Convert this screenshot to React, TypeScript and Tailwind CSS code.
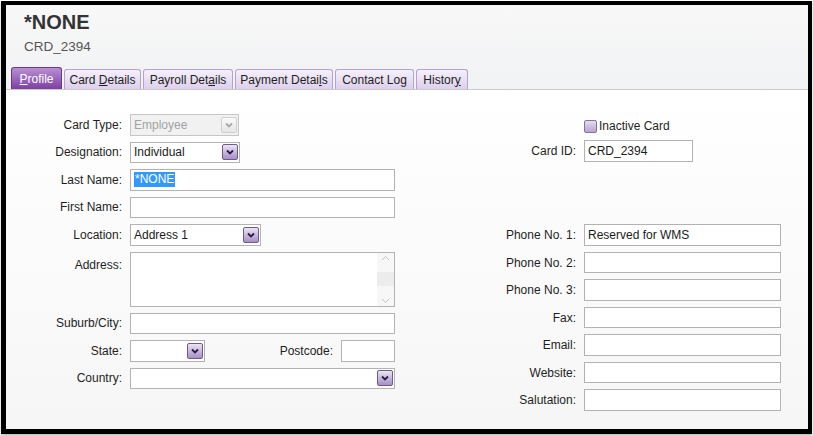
import type { ReactNode } from "react";

const Chevron = ({ color }: { color: string }) => (
    <svg width="10" height="10" viewBox="0 0 10 10">
        <polyline points="2,3.5 5,6.5 8,3.5" fill="none" stroke={color} strokeWidth="1.8" />
    </svg>
);

const DropButton = ({ disabled }: { disabled?: boolean }) =>
    disabled ? (
        <div className="flex h-[16px] w-[16px] items-center justify-center rounded-[2px] border border-[#cfcfcf] bg-gradient-to-b from-[#fafafa] to-[#e6e6e6]">
            <Chevron color="#a8a8a8" />
        </div>
    ) : (
        <div className="flex h-[16px] w-[16px] items-center justify-center rounded-[2px] border border-[#6e5a8c] bg-gradient-to-b from-[#ece4f6] to-[#a68fc6]">
            <Chevron color="#2b1d3d" />
        </div>
    );

const TextBox = ({ w, value, children }: { w: number; value?: string; children?: ReactNode }) => (
    <div
        className="flex h-[21.5px] items-center border border-[#b3b3b3] bg-white px-[3px] text-[#1b1b1b]"
        style={{ width: w }}
    >
        {children ?? value}
    </div>
);

const Select = ({ w, value, disabled }: { w: number; value?: string; disabled?: boolean }) => (
    <div
        className={`flex h-[21.5px] items-center justify-between border pl-[3px] pr-[1px] ${
            disabled ? "border-[#c6c6c6] bg-[#f1f1f1] text-[#a3a3a3]" : "border-[#b3b3b3] bg-white text-[#1b1b1b]"
        }`}
        style={{ width: w }}
    >
        <span>{value}</span>
        <DropButton disabled={disabled} />
    </div>
);

const Row = ({ label, children }: { label: string; children: ReactNode }) => (
    <div className="flex h-[21.5px] items-center">
        <div className="w-[116px] text-right">{label}</div>
        <div className="ml-2 flex items-center">{children}</div>
    </div>
);

const RightRow = ({ label, value }: { label: string; value?: string }) => (
    <div className="flex h-[22px] items-center">
        <div className="w-[96px] text-right">{label}</div>
        <div className="ml-2">
            <TextBox w={197} value={value} />
        </div>
    </div>
);

const tabs = [
    { pre: "", key: "P", post: "rofile", w: 51 },
    { pre: "Card ", key: "D", post: "etails", w: 77 },
    { pre: "Payroll Det", key: "a", post: "ils", w: 90 },
    { pre: "Payment Detai", key: "l", post: "s", w: 98 },
    { pre: "Contact Lo", key: "g", post: "", w: 79 },
    { pre: "Histor", key: "y", post: "", w: 52 },
];

export default function App() {
    return (
        <div className="h-[436px] w-[813px] bg-white pl-[1px] pt-[1px] font-['Liberation_Sans',Arial,sans-serif] text-[12px] text-[#1e1e1e]">
            <div className="flex h-[433px] w-[811px] flex-col border-b-[5px] border-l-[5px] border-r-[4px] border-t-[4px] border-black shadow-[0_2px_2px_rgba(0,0,0,0.25)]">
                {/* header */}
                <div className="flex h-[85px] flex-col border-b border-[#c9c9c9] bg-gradient-to-b from-[#f8f8f8] to-[#f1f2f4] pl-[18px] pt-[5px]">
                    <div className="text-[20px] font-bold leading-[24px] text-[#333]">*NONE</div>
                    <div className="mt-[5px] text-[13.5px] leading-[16px] text-[#555]">CRD_2394</div>
                    <div className="-ml-[13px] mt-auto flex items-end gap-[2px]">
                        {tabs.map((t, i) => (
                            <div
                                key={i}
                                className={`flex items-center justify-center rounded-t-[3px] border border-b-0 ${
                                    i === 0
                                        ? "h-[22px] border-[#6b3a8c] bg-gradient-to-b from-[#b98fd4] to-[#7e3fa3] text-white"
                                        : "h-[20px] border-[#b6a3cc] bg-gradient-to-b from-[#f5f0fa] to-[#ddd0ec] text-[#1e1e1e]"
                                }`}
                                style={{ width: t.w }}
                            >
                                <span className="whitespace-pre">
                                    {t.pre}
                                    <span className="underline">{t.key}</span>
                                    {t.post}
                                </span>
                            </div>
                        ))}
                    </div>
                </div>

                {/* body */}
                <div className="flex flex-1 bg-gradient-to-b from-white to-[#f6f6f6]">
                    {/* left column */}
                    <div className="flex w-[474px] flex-col gap-[6px] pt-[24px]">
                        <Row label="Card Type:">
                            <Select w={109} value="Employee" disabled />
                        </Row>
                        <Row label="Designation:">
                            <Select w={110} value="Individual" />
                        </Row>
                        <Row label="Last Name:">
                            <TextBox w={265}>
                                <span className="bg-[#3399ff] px-[1px] leading-[15px] text-white">*NONE</span>
                            </TextBox>
                        </Row>
                        <Row label="First Name:">
                            <TextBox w={265} />
                        </Row>
                        <Row label="Location:">
                            <Select w={131} value="Address 1" />
                        </Row>
                        <div className="flex h-[55px] items-start">
                            <div className="w-[116px] pt-[4px] text-right">Address:</div>
                            <div className="ml-2 flex h-[55px] w-[265px] border border-[#b3b3b3] bg-white">
                                <div className="flex-1" />
                                <div className="flex w-[17px] flex-col items-center justify-between bg-[#f7f7f7] py-[2px]">
                                    <svg width="9" height="6" viewBox="0 0 9 6">
                                        <polyline points="1,5 4.5,1.5 8,5" fill="none" stroke="#c2c2c2" strokeWidth="1" />
                                    </svg>
                                    <div className="h-[14px] w-full bg-[#ececec]" />
                                    <svg width="9" height="6" viewBox="0 0 9 6">
                                        <polyline points="1,1 4.5,4.5 8,1" fill="none" stroke="#c2c2c2" strokeWidth="1" />
                                    </svg>
                                </div>
                            </div>
                        </div>
                        <Row label="Suburb/City:">
                            <TextBox w={265} />
                        </Row>
                        <Row label="State:">
                            <Select w={75} />
                            <div className="w-[128px] text-right">Postcode:</div>
                            <div className="ml-2">
                                <TextBox w={54} />
                            </div>
                        </Row>
                        <Row label="Country:">
                            <Select w={265} />
                        </Row>
                    </div>

                    {/* right column */}
                    <div className="flex flex-1 flex-col pt-[27px]">
                        <div className="flex h-[18px] items-center pl-[104px]">
                            <div className="h-[13px] w-[13px] rounded-[2px] border border-[#85739f] bg-gradient-to-b from-[#e6dcf0] to-[#b7a5cf]" />
                            <span className="ml-[2px]">Inactive Card</span>
                        </div>
                        <div className="mt-[5px]">
                            <div className="flex h-[22px] items-center">
                                <div className="w-[96px] text-right">Card ID:</div>
                                <div className="ml-2">
                                    <TextBox w={109} value="CRD_2394" />
                                </div>
                            </div>
                        </div>
                        <div className="mt-[62px] flex flex-col gap-[5.5px]">
                            <RightRow label="Phone No. 1:" value="Reserved for WMS" />
                            <RightRow label="Phone No. 2:" />
                            <RightRow label="Phone No. 3:" />
                            <RightRow label="Fax:" />
                            <RightRow label="Email:" />
                            <RightRow label="Website:" />
                            <RightRow label="Salutation:" />
                        </div>
                    </div>
                </div>
            </div>
        </div>
    );
}
